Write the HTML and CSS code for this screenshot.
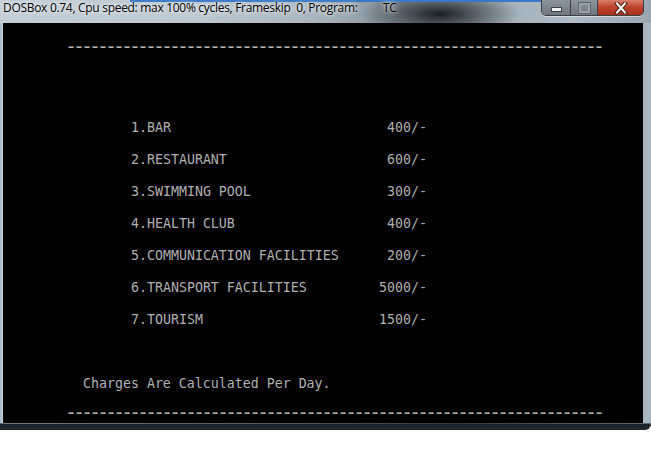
FILE: index.html
```html
<!DOCTYPE html>
<html>
<head>
<meta charset="utf-8">
<title>DOSBox</title>
<link rel="stylesheet" href="styles.css">
</head>
<body>
<div class="window">
  <div class="titlebar">
    <span class="title">DOSBox 0.74, Cpu speed: max 100% cycles, Frameskip  0, Program:         TC</span>
    <div class="controls">
      <div class="btn btn-min"><span class="min-bar"></span></div>
      <div class="btn btn-max"><span class="max-box"></span></div>
      <div class="btn btn-close">
        <svg width="14" height="12" viewBox="0 0 14 12"><path d="M3 1.5 L11 10.5 M11 1.5 L3 10.5" stroke="#3a1a14" stroke-width="4" stroke-linecap="square"/><path d="M3 1.5 L11 10.5 M11 1.5 L3 10.5" stroke="#ffffff" stroke-width="2" stroke-linecap="square"/></svg>
      </div>
    </div>
  </div>
  <div class="client">
    <div class="screen">
      <div class="row"></div>
      <div class="row dashes dash-top">-------------------------------------------------------------------</div>
      <div class="row"></div>
      <div class="row"></div>
      <div class="row"></div>
      <div class="row"></div>
      <div class="row item"><span>1.BAR</span><span>400/-</span></div>
      <div class="row"></div>
      <div class="row item"><span>2.RESTAURANT</span><span>600/-</span></div>
      <div class="row"></div>
      <div class="row item"><span>3.SWIMMING POOL</span><span>300/-</span></div>
      <div class="row"></div>
      <div class="row item"><span>4.HEALTH CLUB</span><span>400/-</span></div>
      <div class="row"></div>
      <div class="row item"><span>5.COMMUNICATION FACILITIES</span><span>200/-</span></div>
      <div class="row"></div>
      <div class="row item"><span>6.TRANSPORT FACILITIES</span><span>5000/-</span></div>
      <div class="row"></div>
      <div class="row item"><span>7.TOURISM</span><span>1500/-</span></div>
      <div class="row"></div>
      <div class="row"></div>
      <div class="row"></div>
      <div class="row note">Charges Are Calculated Per Day.</div>
      <div class="row"></div>
      <div class="row dashes dash-bottom">-------------------------------------------------------------------</div>
    </div>
  </div>
</div>
</body>
</html>
```
FILE: styles.css
```css
html, body {
  margin: 0;
  padding: 0;
  background: #ffffff;
}
body {
  width: 651px;
  height: 460px;
  overflow: hidden;
}
.window {
  width: 651px;
  height: 430px;
  background:
    linear-gradient(to bottom, rgba(0,0,0,0) 0, rgba(0,0,0,0) 423px, #1a2127 424px, #222b31 430px),
    linear-gradient(to right, #9fb6c9 0, #c4d2dc 3px, #8f9ca6 40%, #4d565d 70%, #a9b7c2 100%);
  border-bottom-right-radius: 6px;
  display: flex;
  flex-direction: column;
}
.titlebar {
  height: 23px;
  display: flex;
  position: relative;
  background:
    linear-gradient(to bottom, #3a78c6 0, #3a78c6 2px, rgba(0,0,0,0) 2px) 130px 0 / 411px 2px no-repeat,
    radial-gradient(ellipse 80px 24px at 440px 14px, rgba(20,24,28,0.95), rgba(20,24,28,0) 100%),
    linear-gradient(to right, #c2ced8 0, #bcc8d2 30%, #aab6c0 48%, #8e9aa4 58%, #a3afb9 75%, #b1bcc5 88%, #9aa6b0 100%);
}
.title {
  font-family: "Open Sans", "Noto Sans", sans-serif;
  font-size: 12px;
  letter-spacing: -0.3px;
  line-height: 23px;
  white-space: pre;
  color: #000000;
  padding-left: 3px;
  margin-top: -4px;
  text-shadow: 0 0 6px rgba(255,255,255,0.9), 0 0 3px rgba(255,255,255,0.8);
}
.controls {
  position: absolute;
  left: 541px;
  top: 0;
  display: flex;
  height: 15px;
  border: 1px solid #3b4046;
  border-top: none;
  border-radius: 0 0 5px 5px;
  overflow: hidden;
  box-shadow: 0 1px 0 rgba(255,255,255,0.5);
}
.btn {
  height: 15px;
  display: flex;
  align-items: center;
  justify-content: center;
}
.btn-min {
  width: 28px;
  background: linear-gradient(to bottom, #8d959c, #6e777e);
  border-right: 1px solid #3b4046;
}
.btn-max {
  width: 26px;
  background: linear-gradient(to bottom, #8d959c, #6e777e);
  border-right: 1px solid #3b4046;
}
.btn-close {
  width: 45px;
  background: linear-gradient(to bottom, #d9826f, #c0432c 45%, #a8321e 100%);
}
.min-bar {
  width: 9px;
  height: 3px;
  background: #f2f2f2;
  border: 1px solid #3a3f44;
  margin-top: 3px;
}
.max-box {
  width: 7px;
  height: 6px;
  border: 2px solid #9aa3aa;
  outline: 1px solid #5d666d;
}
.client {
  margin: 0 8px 0 3px;
  width: 640px;
  height: 400px;
  background: #000000;
}
.screen {
  font-family: "DejaVu Sans Mono", monospace;
  font-size: 13.28px;
  color: #b0b0b0;
  line-height: 18px;
}
.row {
  height: 16px;
  white-space: pre;
}
.dashes {
  padding-left: 62px;
  font-size: 20px;
  letter-spacing: -4.04px;
  line-height: 14px;
}
.dash-bottom {
  line-height: 11px;
}
.item {
  display: flex;
  justify-content: space-between;
  width: 296px;
  padding-left: 128px;
}
.note {
  padding-left: 80px;
}
```
